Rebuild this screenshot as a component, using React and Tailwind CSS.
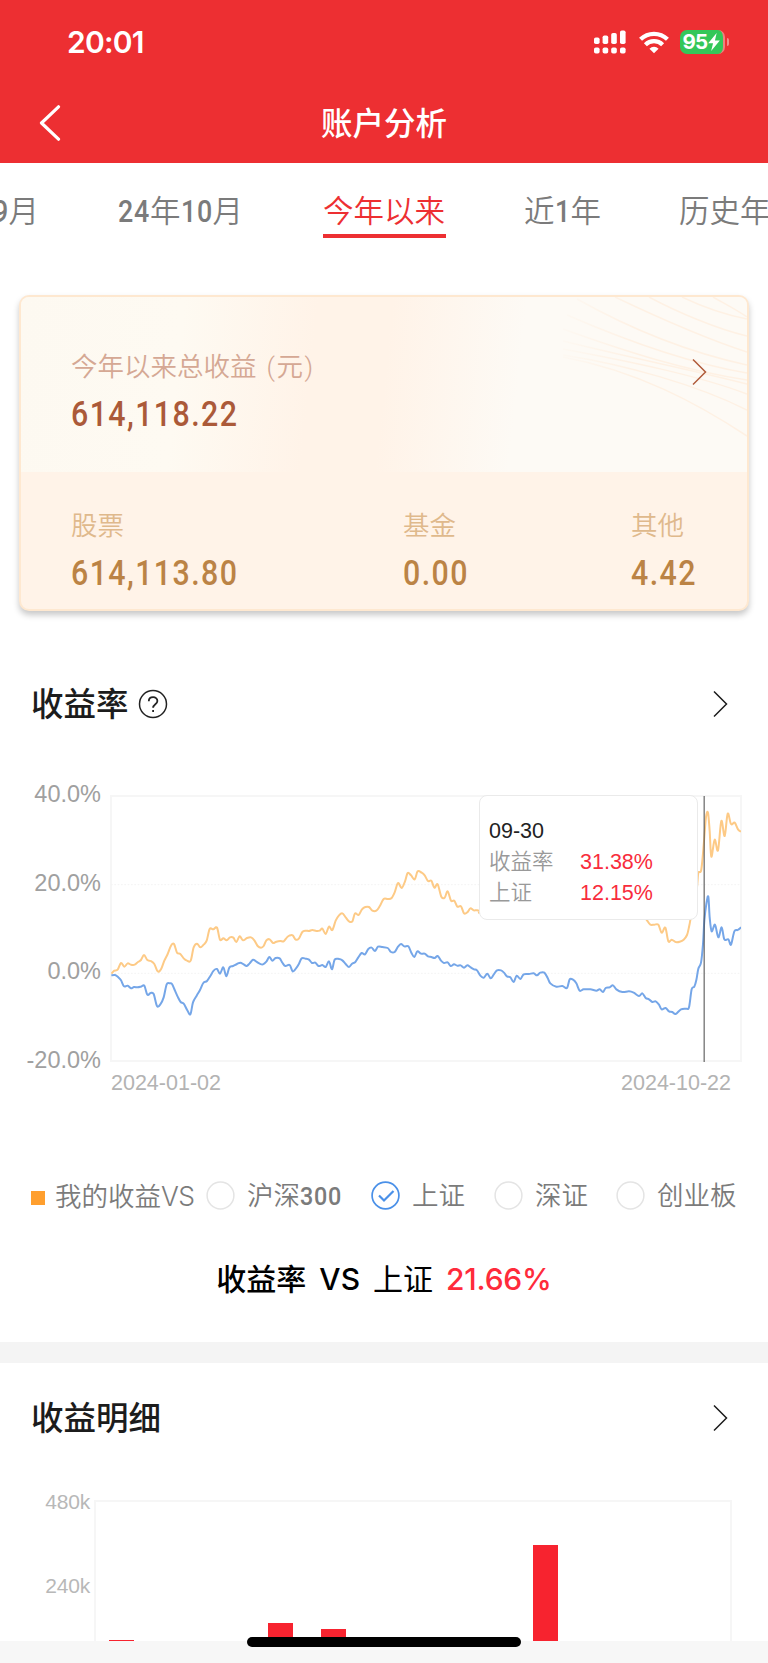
import React from 'react';

// [x, y] points of the two curves, plot area is 1890 x 798 units
const myCurve = [
    [1, 533], [10, 524], [20, 521], [30, 501], [40, 512], [50, 502], [60, 506], [71, 506], [81, 498], [90, 492],
    [99, 477], [109, 492], [119, 495], [130, 504], [140, 526], [150, 520], [160, 494], [170, 474], [180, 449], [189, 444],
    [198, 470], [208, 474], [218, 487], [228, 494], [239, 494], [248, 454], [258, 443], [268, 454], [278, 446], [287, 434],
    [296, 399], [307, 400], [318, 395], [327, 431], [337, 427], [347, 433], [357, 424], [367, 425], [376, 438], [386, 421],
    [396, 433], [408, 426], [420, 424], [430, 433], [440, 450], [450, 455], [458, 450], [466, 433], [476, 430], [486, 441],
    [496, 437], [508, 435], [518, 436], [528, 424], [535, 419], [545, 418], [554, 431], [564, 427], [574, 408], [584, 404],
    [594, 405], [604, 402], [616, 405], [626, 404], [634, 398], [644, 414], [654, 392], [664, 402], [674, 374], [684, 358],
    [694, 352], [704, 364], [714, 376], [724, 376], [732, 352], [743, 357], [753, 340], [763, 333], [774, 333], [784, 344],
    [796, 344], [806, 331], [818, 309], [830, 309], [841, 307], [851, 289], [861, 261], [872, 276], [882, 256], [890, 231],
    [900, 238], [911, 250], [920, 226], [932, 230], [941, 238], [951, 255], [961, 254], [970, 275], [980, 265], [991, 302],
    [1001, 305], [1010, 286], [1020, 314], [1030, 314], [1039, 332], [1050, 331], [1059, 352], [1069, 349], [1078, 337],
    [1088, 343], [1098, 343], [1112, 347], [1126, 350], [1140, 348], [1580, 330], [1590, 344], [1600, 362], [1608, 373],
    [1618, 386], [1630, 386], [1642, 386], [1652, 410],
    [1663, 395], [1672, 436], [1682, 431], [1694, 438], [1706, 437], [1718, 431], [1728, 417], [1734, 393], [1739, 368],
    [1750, 313], [1758, 273], [1762, 231], [1770, 225], [1775, 183], [1780, 123], [1785, 63], [1791, 50], [1796, 105],
    [1801, 182], [1811, 131], [1821, 163], [1831, 75], [1841, 120], [1850, 53], [1860, 84], [1871, 80], [1881, 100], [1890, 107],
];

const indexCurve = [
    [1, 538], [12, 537], [22, 544], [30, 553], [39, 571], [50, 569], [60, 577], [69, 573], [80, 574], [90, 572],
    [100, 569], [109, 596], [119, 591], [128, 594], [138, 630], [148, 625], [158, 604], [167, 565], [176, 562], [183, 564],
    [192, 584], [200, 602], [209, 618], [218, 623], [228, 641], [238, 655], [246, 619], [257, 599], [267, 582], [277, 561],
    [288, 555], [298, 540], [308, 524], [318, 519], [327, 533], [337, 514], [346, 541], [355, 515], [366, 510], [378, 504],
    [388, 500], [398, 505], [407, 510], [416, 502], [426, 491], [436, 497], [446, 503], [456, 505], [466, 497], [475, 483],
    [484, 494], [494, 486], [506, 487], [514, 500], [523, 510], [536, 507], [545, 526], [555, 517], [564, 503], [572, 487],
    [584, 488], [594, 491], [603, 501], [613, 500], [623, 510], [634, 507], [644, 513], [654, 496], [663, 520], [671, 491],
    [684, 489], [694, 493], [704, 504], [714, 513], [723, 503], [733, 498], [742, 484], [752, 471], [762, 475], [772, 459],
    [782, 455], [792, 465], [801, 452], [814, 453], [830, 456], [840, 468], [851, 468], [861, 452], [870, 444], [880, 451],
    [892, 451], [901, 470], [910, 483], [919, 466], [930, 473], [941, 473], [951, 481], [961, 483], [971, 486], [980, 480],
    [990, 494], [999, 501], [1010, 499], [1019, 510], [1029, 505], [1039, 509], [1049, 508], [1059, 515], [1069, 508],
    [1079, 514], [1089, 520], [1098, 523], [1108, 539], [1118, 545], [1129, 533], [1139, 547], [1148, 536], [1158, 523],
    [1170, 523], [1179, 530], [1188, 541], [1198, 544], [1208, 558], [1217, 539], [1228, 549], [1238, 535], [1254, 534],
    [1268, 532], [1278, 538], [1288, 530], [1300, 530], [1310, 546], [1318, 562], [1336, 572], [1354, 570], [1368, 576],
    [1376, 550], [1386, 551], [1396, 562], [1406, 584], [1418, 580], [1438, 580], [1456, 584], [1466, 580], [1476, 588],
    [1484, 576], [1496, 574], [1506, 568], [1516, 580], [1534, 588], [1554, 586], [1568, 590], [1584, 600], [1594, 592],
    [1604, 606], [1614, 610], [1624, 618], [1634, 616], [1644, 626], [1652, 640], [1664, 636], [1674, 646], [1684, 648],
    [1694, 654], [1710, 640], [1726, 638], [1734, 634], [1742, 580], [1750, 572], [1756, 552], [1762, 518], [1770, 500],
    [1776, 444], [1780, 374], [1786, 324], [1792, 302], [1796, 364], [1802, 406], [1812, 386], [1822, 424], [1832, 394],
    [1840, 430], [1852, 430], [1860, 446], [1870, 406], [1880, 402], [1890, 394],
];

const smoothPath = (points) => {
    let d = `M${points[0][0]} ${points[0][1]}`;
    for (let i = 0; i < points.length - 1; i++) {
        const p0 = points[i - 1] || points[i];
        const p1 = points[i];
        const p2 = points[i + 1];
        const p3 = points[i + 2] || p2;
        const x1 = p1[0] + (p2[0] - p0[0]) / 6;
        const y1 = p1[1] + (p2[1] - p0[1]) / 6;
        const x2 = p2[0] - (p3[0] - p1[0]) / 6;
        const y2 = p2[1] - (p3[1] - p1[1]) / 6;
        d += `C${x1} ${y1} ${x2} ${y2} ${p2[0]} ${p2[1]}`;
    }
    return d;
};

const bars = [
    { month: '01', left: 13, height: 1 },
    { month: '04', left: 172, height: 18 },
    { month: '05', left: 225, height: 12 },
    { month: '09', left: 437, height: 96 },
];

const Arrow = ({ className }) => (
    <svg className={className} width="15" height="28" viewBox="0 0 15 28" fill="none" stroke="currentColor" strokeWidth="1.5">
        <path d="M1 1.5 L13.5 14 L1 26.5" />
    </svg>
);

const StatusBar = () => (
    <div className="flex h-[84px] items-center justify-between pr-[39px] pl-[67px] text-white">
        <span className="font-['Inter'] text-[30px] leading-none font-semibold tracking-[-0.8px]">20:01</span>
        <div className="flex items-center">
            <svg width="32" height="24" viewBox="0 0 32 24" fill="currentColor">
                <rect x="0" y="7.5" width="5.6" height="6.5" rx="1.8" />
                <rect x="8.6" y="5.5" width="5.6" height="8.5" rx="1.8" />
                <rect x="17.2" y="3" width="5.6" height="11" rx="1.8" />
                <rect x="26" y="0.5" width="5.6" height="13.5" rx="1.8" />
                <rect x="0" y="17.5" width="5.6" height="6" rx="1.8" />
                <rect x="8.6" y="17.5" width="5.6" height="6" rx="1.8" />
                <rect x="17.2" y="17.5" width="5.6" height="6" rx="1.8" />
                <rect x="26" y="17.5" width="5.6" height="6" rx="1.8" />
            </svg>
            <svg className="ml-[13px]" width="30" height="23" viewBox="0 0 31 23" fill="none" stroke="currentColor" strokeWidth="4.4">
                <path d="M1.6 8.2 A20 20 0 0 1 29.4 8.2" />
                <path d="M6.6 13.8 A12.8 12.8 0 0 1 24.4 13.8" />
                <path d="M15.5 22.6 L10.8 17.9 A6.8 6.8 0 0 1 20.2 17.9 Z" fill="currentColor" stroke="none" />
            </svg>
            <div className="ml-[11px] flex h-[24px] w-[45px] items-center justify-center rounded-[7px] border-r-2 border-[#f08080] bg-[#34c759]">
                <span className="font-['Inter'] text-[20.5px] leading-[24px] font-bold tracking-[-0.8px]">95</span>
                <svg className="ml-px" width="12" height="18" viewBox="0 0 11 17" fill="currentColor">
                    <path d="M8 0 L0 9.6 H4.6 L2.8 17 L11 7 H6.4 Z" />
                </svg>
            </div>
            <div className="ml-[2px] h-[8px] w-[2px] rounded-r bg-[#f58a8c]" />
        </div>
    </div>
);

// Narrow numerals used next to the Chinese labels
const Digits = ({ className, children }) => (
    <span className={`inline-block origin-left scale-x-[0.88] font-medium tracking-[0.9px] ${className}`}>{children}</span>
);

const Amount = ({ className, children }) => (
    <p className={`mt-[12px] origin-left scale-x-[0.88] text-[34.5px] leading-[40px] font-medium tracking-[1.6px] ${className}`}>{children}</p>
);

const Radio = ({ checked, label, className }) => (
    <div className={`flex items-center ${className}`}>
        <svg className="-mt-[2px]" width="29" height="29" viewBox="0 0 29 29" fill="none">
            <circle cx="14.5" cy="14.5" r="13.4" stroke={checked ? '#4a90e8' : '#e4e4e4'} strokeWidth={checked ? 1.7 : 1.5} />
            {checked && <path d="M8 14.5 L13 19.5 L22.5 10" stroke="#4a90e8" strokeWidth="2.2" />}
        </svg>
        <span className="ml-[12px] whitespace-nowrap">{label}</span>
    </div>
);

const App = () => {
    return (
        <div className="flex h-[1663px] w-[768px] flex-col overflow-hidden bg-white font-['Roboto','Noto_Sans_CJK_SC',sans-serif] text-[#1c1c1c]">
            <header className="h-[163px] shrink-0 bg-[#ed2f32]">
                <StatusBar />
                <div className="grid h-[77px] grid-cols-3 items-center text-white">
                    <svg className="ml-[39px]" width="22" height="36" viewBox="0 0 22 36" fill="none" stroke="currentColor" strokeWidth="3.2" strokeLinecap="round" strokeLinejoin="round">
                        <path d="M19.5 1.8 L2.5 18 L19.5 34.2" />
                    </svg>
                    <h1 className="pt-[4px] text-center text-[31.5px] leading-none font-medium">账户分析</h1>
                </div>
            </header>

            {/* Period tabs */}
            <nav className="flex h-[75px] shrink-0 text-[30.5px] leading-[98px] font-[350] whitespace-nowrap text-[#7b7b7b]">
                <span className="w-[118px] shrink-0">
                    <span className="float-right mr-[79px]"><Digits className="w-[16px]">9</Digits>月</span>
                </span>
                <span className="w-[205px] shrink-0"><Digits className="w-[32px]">24</Digits>年<Digits className="w-[32px]">10</Digits>月</span>
                <span className="h-[75px] w-[123px] shrink-0 border-b-4 border-[#ed2f32] text-[#ed2f32]">今年以来</span>
                <span className="ml-[78px] w-[155px] shrink-0">近<Digits className="w-[16px]">1</Digits>年</span>
                <span className="shrink-0">历史年</span>
            </nav>

            {/* Total profit card */}
            <section className="mx-[19px] mt-[57px] h-[316px] shrink-0 overflow-hidden rounded-[10px] border-2 border-[#fee8d0] bg-[#fff3e8] shadow-[0_4px_6px_rgba(0,0,0,0.22)]">
                <div className="relative h-[175px] bg-[linear-gradient(96deg,#fdf9f1_0%,#fefaf2_22%,#fff3e8_40%,#fff3e8_50%,#fdfaf5_68%,#fdfaf5_100%)]">
                    <svg className="absolute top-0 right-0" width="220" height="175" viewBox="0 0 220 175" fill="none" stroke="url(#cardLines)" strokeWidth="1.5">
                        <defs>
                            <linearGradient id="cardLines" gradientUnits="userSpaceOnUse" x1="20" y1="0" x2="110" y2="0">
                                <stop offset="0" stopColor="#fef1e4" stopOpacity="0" />
                                <stop offset="1" stopColor="#fef1e4" />
                            </linearGradient>
                        </defs>
                        <path d="M88 0 C130 20 180 42 220 55" />
                        <path d="M122 0 C150 15 190 32 220 39" />
                        <path d="M155 0 C180 12 200 18 220 22" />
                        <path d="M186 0 C200 8 210 13 220 20" />
                        <path d="M50 2 C100 30 160 55 220 68" />
                        <path d="M40 18 C100 44 160 66 220 76" />
                        <path d="M36 32 C100 55 160 74 220 83" />
                        <path d="M36 44 C100 60 170 74 220 87" />
                        <path d="M36 52 C100 64 170 78 220 97" />
                        <path d="M36 58 C100 68 170 88 220 113" />
                        <path d="M36 60 C110 74 170 106 220 139" />
                    </svg>
                    <div className="relative flex items-start justify-between pr-[40px] pl-[50px]">
                        <div className="pt-[55px]">
                            <p className="text-[26.5px] leading-[30px] font-[350] text-[#d5a894]">
                                今年以来总收益<span className="ml-[10px] tracking-[1.5px]">(元)</span>
                            </p>
                            <Amount className="text-[#ab5a39]">614,118.22</Amount>
                        </div>
                        <Arrow className="mt-[61px] text-[#b05c3c]" />
                    </div>
                </div>
                <div className="flex pt-[39px] pl-[50px]">
                    <div className="w-[332px]">
                        <p className="text-[26.5px] leading-[30px] font-[350] text-[#dfb98c]">股票</p>
                        <Amount className="text-[#bb8345]">614,113.80</Amount>
                    </div>
                    <div className="w-[228px]">
                        <p className="text-[26.5px] leading-[30px] font-[350] text-[#dfb98c]">基金</p>
                        <Amount className="text-[#bb8345]">0.00</Amount>
                    </div>
                    <div>
                        <p className="text-[26.5px] leading-[30px] font-[350] text-[#dfb98c]">其他</p>
                        <Amount className="text-[#bb8345]">4.42</Amount>
                    </div>
                </div>
            </section>

            {/* Return rate */}
            <section className="h-[731px] shrink-0">
                <div className="flex items-center justify-between pt-[73px] pr-[40px] pl-[31px]">
                    <div className="flex h-[40px] items-center">
                        <h2 className="pt-[2px] text-[32.5px] leading-none font-medium">收益率</h2>
                        <svg className="ml-[9px]" width="30" height="30" viewBox="0 0 30 30" fill="none" stroke="#222" strokeWidth="1.5">
                            <circle cx="15" cy="15" r="13.5" />
                            <path d="M10.8 12.2 C10.8 6.8 19.4 6.8 19.4 12 C19.4 15.2 15.1 15.2 15.1 18.8" strokeWidth="1.8" />
                            <path d="M15.1 21 V23" strokeWidth="1.8" />
                        </svg>
                    </div>
                    <Arrow />
                </div>

                <div className="mt-[56px] flex font-['Liberation_Sans','Noto_Sans_CJK_SC',sans-serif]">
                    <div className="flex h-[294px] w-[101px] flex-col justify-between text-right text-[23.5px] leading-[28px] text-[#a0a0a0]">
                        <span>40.0%</span>
                        <span>20.0%</span>
                        <span>0.0%</span>
                        <span>-20.0%</span>
                    </div>
                    <div className="ml-[9px] pt-[15px]">
                        <div className="relative h-[267px] w-[632px] border-2 border-[#f6f6f6]">
                            <svg className="absolute -top-px -left-[1.5px]" width="630" height="266" viewBox="0 0 1890 798" fill="none">
                                <path d="M0 266 H1890 M0 532 H1890" stroke="#f3f3f3" strokeWidth="3" strokeDasharray="5 5" />
                                <path d={smoothPath(myCurve)} stroke="#fdca86" strokeWidth="6" strokeLinejoin="round" />
                                <path d={smoothPath(indexCurve)} stroke="#75a6e8" strokeWidth="6" strokeLinejoin="round" />
                                <path d="M1779.5 0 V798" stroke="#4a4a4a" strokeOpacity="0.85" strokeWidth="3.6" />
                            </svg>
                            <div className="absolute -top-[2px] left-[367px] h-[125px] w-[219px] rounded-[8px] border-[1.5px] border-[#eaeaea] bg-white pt-[20px] pl-[9px] text-[21.5px] leading-[31px]">
                                <p className="text-[#222]">09-30</p>
                                <p className="flex text-[#f82c3c]"><span className="w-[91px] font-[350] text-[#999]">收益率</span>31.38%</p>
                                <p className="flex text-[#f82c3c]"><span className="w-[91px] font-[350] text-[#999]">上证</span>12.15%</p>
                            </div>
                        </div>
                        <div className="mt-[7px] ml-px flex w-[620px] justify-between text-[21.5px] leading-[28px] text-[#b3b3b3]">
                            <span>2024-01-02</span>
                            <span>2024-10-22</span>
                        </div>
                    </div>
                </div>

                <div className="mt-[82px] flex h-[34px] items-center pl-[31px] text-[26.5px] leading-none font-[350] text-[#7b7b7b]">
                    <i className="mt-[3px] h-[14px] w-[14px] bg-[#ff9f2e]" />
                    <span className="ml-[10px] w-[151px] font-['Inter','Noto_Sans_CJK_SC',sans-serif] tracking-[-0.7px] whitespace-nowrap">
                        <span className="tracking-normal">我的收益</span>VS
                    </span>
                    <Radio className="w-[165px]" label={<>沪深<Digits className="w-[40px]">300</Digits></>} />
                    <Radio className="w-[123px]" label="上证" checked />
                    <Radio className="w-[122px]" label="深证" />
                    <Radio label="创业板" />
                </div>

                <p className="mt-[48px] flex justify-center font-['Inter','Noto_Sans_CJK_SC',sans-serif] text-[30px] leading-[36px] text-black">
                    <span className="font-medium">收益率</span>
                    <span className="ml-[13px] font-medium">VS</span>
                    <span className="ml-[13px]">上证</span>
                    <span className="ml-[13px] font-medium tracking-[-0.2px] text-[#ff2b3b]">21.66%</span>
                </p>
            </section>

            <div className="h-[21px] shrink-0 bg-[#f4f4f4]" />

            {/* Profit details */}
            <section className="h-[278px] shrink-0 overflow-hidden">
                <div className="flex items-center justify-between pt-[35px] pr-[40px] pl-[31px]">
                    <h2 className="pt-[2px] text-[32.5px] leading-[38px] font-medium">收益明细</h2>
                    <Arrow />
                </div>
                <div className="mt-[49px] flex font-['Liberation_Sans',sans-serif]">
                    <div className="flex h-[113px] w-[90px] flex-col justify-between pt-px text-right text-[21px] leading-[28px] tracking-[-0.2px] text-[#b8b8b8]">
                        <span>480k</span>
                        <span>240k</span>
                    </div>
                    <div className="mt-[13px] ml-[4px] h-[141px] w-[638px] border-2 border-b-0 border-[#f6f6f6]">
                        <div className="relative h-full">
                            {bars.map(bar => (
                                <div
                                    className="absolute bottom-0 w-[25px] bg-[#f7232f]"
                                    key={bar.month}
                                    style={{ left: bar.left, height: bar.height }}
                                />
                            ))}
                        </div>
                    </div>
                </div>
            </section>

            <footer className="relative h-[22px] shrink-0 bg-[#f7f7f7]">
                <div className="absolute -top-[4px] left-[247px] h-[10px] w-[274px] rounded-full bg-black" />
            </footer>
        </div>
    );
};

export default App;
